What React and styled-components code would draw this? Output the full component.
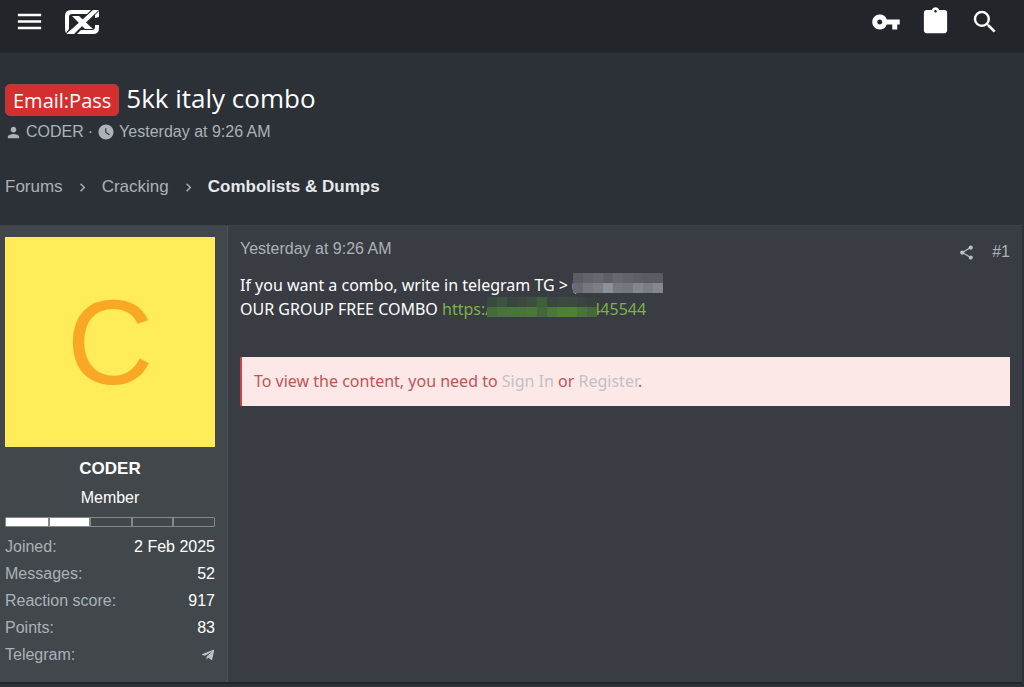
import React from 'react';
import styled, { createGlobalStyle } from 'styled-components';
import {
  MdMenu,
  MdVpnKey,
  MdSearch,
  MdPerson,
  MdWatchLater,
  MdChevronRight,
  MdShare,
} from 'react-icons/md';
import { FaTelegramPlane } from 'react-icons/fa';

const GlobalStyle = createGlobalStyle`
  * {
    box-sizing: border-box;
  }
  body {
    margin: 0;
    background: #2c3137;
    color: #fff;
    font-family: "Liberation Sans", Arial, sans-serif;
    font-size: 16px;
    line-height: 24px;
  }
  a {
    color: inherit;
    text-decoration: none;
  }
  svg {
    display: block;
    flex: none;
  }
`;

const headingFont = '"Open Sans", sans-serif';
const messageFont = '"Noto Sans", sans-serif';

const TopBar = styled.header`
  display: flex;
  align-items: center;
  height: 53px;
  padding: 0 24px 9px 14px;
  background: #222529;
  border-bottom: 1px solid #272c31;
`;

const IconButton = styled.button`
  display: flex;
  padding: 0;
  border: 0;
  background: none;
  color: ${({ $muted }) => ($muted ? '#b9bfc5' : '#fff')};
  cursor: pointer;
`;

const LogoLink = styled.a`
  margin-left: 20px;
`;

const TopActions = styled.nav`
  display: flex;
  align-items: center;
  gap: 19px;
  margin-left: auto;
`;

const ThreadHead = styled.section`
  padding: 30px 5px 0;
`;

const Title = styled.h1`
  display: flex;
  align-items: baseline;
  gap: 7px;
  margin: 0;
  font: 400 26px/30px ${headingFont};
`;

const Prefix = styled.span`
  padding: 1px 7px 0;
  border: 1px solid #a8434a;
  border-radius: 5px;
  background: #d32f2f;
  font-size: 20px;
  line-height: 29px;
`;

const Meta = styled.div`
  display: flex;
  align-items: center;
  gap: 4px;
  margin-top: 4px;
  color: #abb2b9;
`;

const Crumbs = styled.nav`
  display: flex;
  align-items: center;
  gap: 11px;
  padding: 31px 5px 26px;
  color: #abb2b9;
  font-size: 17px;
`;

const CurrentCrumb = styled.a`
  color: #e6e9ec;
  font-weight: 700;
`;

const Post = styled.article`
  display: flex;
  margin-right: 2px;
  background: #393c43;
  border-top: 1px solid #3d4247;
  border-bottom: 2px solid #212529;
`;

const UserCell = styled.aside`
  flex: none;
  width: 228px;
  padding: 11px 12px 14px 5px;
  border-right: 1px solid #4b5157;
  background: #42474c;
`;

const Avatar = styled.a`
  display: flex;
  align-items: center;
  justify-content: center;
  width: 210px;
  height: 210px;
  background: #ffec58;
  color: #f9a825;
  font-size: 120px;
  line-height: 1;
`;

const UserName = styled.h4`
  margin: 10px 0 0;
  font-size: 17px;
  line-height: 24px;
  text-align: center;
`;

const UserRank = styled.div`
  margin-top: 5px;
  text-align: center;
`;

const Level = styled.div`
  display: grid;
  grid-template-columns: repeat(5, 1fr);
  height: 10px;
  margin-top: 7px;
  border: 1px solid #83888d;
  border-radius: 1px;
`;

const LevelStep = styled.span`
  border-left: ${({ $first }) => ($first ? '0' : '2px solid #83888d')};
  background: ${({ $on }) => ($on ? '#fff' : 'transparent')};
`;

const Stats = styled.dl`
  margin: 6px 0 0;
`;

const StatRow = styled.div`
  display: flex;
  align-items: center;
  justify-content: space-between;
  height: 27px;
  dt {
    color: #abb2b9;
  }
  dd {
    margin: 0;
  }
`;

const TelegramLink = styled.a`
  display: block;
  color: #b9c1c8;
`;

const MainCell = styled.div`
  flex: 1;
  min-width: 0;
  padding: 11px 12px;
`;

const PostHead = styled.div`
  display: flex;
  justify-content: space-between;
  color: #abb2b9;
`;

const PostTools = styled.div`
  display: flex;
  align-items: center;
  gap: 17px;
  padding-top: 3px;
`;

const Message = styled.p`
  margin: 9px 0 0;
  font-family: ${messageFont};
  font-size: 16px;
  line-height: 24px;
`;

const GreenLink = styled.a`
  color: #7cb342;
`;

// sits on top of the edges of the neighbouring characters
const Mosaic = styled.span`
  position: relative;
  display: inline-grid;
  grid-template-columns: repeat(${({ $cols }) => $cols}, 10px);
  grid-auto-rows: 10px;
  margin: 0 -6px 0 -4px;
  vertical-align: top;
`;

const Tile = styled.span`
  background: ${({ $color }) => $color};
`;

const Notice = styled.div`
  margin-top: 36px;
  padding: 12px;
  border-left: 2px solid #c84448;
  background: #fde8e8;
  color: #c05355;
  font-family: ${messageFont};
  font-size: 16px;
  line-height: 25px;
  a {
    color: #bfc1c6;
  }
`;

const grayTiles = [
  '#5b5d64', '#62646a', '#66686f', '#5e6067', '#66686e', '#62646b', '#5d5f66', '#5a5c63', '#5a5c62',
  '#686a70', '#75777d', '#7c7e84', '#8b9198', '#777980', '#74767c', '#84868b', '#7b7d83', '#85878d',
];

const greenTiles = [
  '#3b4a3e', '#3c553d', '#394540', '#3b4941', '#3c503f', '#3e613d', '#3a4641', '#3b4b40', '#3a4a40', '#394540', '#39413f',
  '#456b3c', '#4a733b', '#46763a', '#4b743b', '#4b773b', '#46673c', '#4a773a', '#4d803a', '#4e803a', '#4a7439', '#45683c',
];

const stats = [
  ['Joined', '2 Feb 2025'],
  ['Messages', '52'],
  ['Reaction score', '917'],
  ['Points', '83'],
];

function Redacted({ tiles }) {
  return (
    <Mosaic $cols={tiles.length / 2} aria-hidden="true">
      {tiles.map((color, i) => (
        <Tile key={i} $color={color} />
      ))}
    </Mosaic>
  );
}

function Logo() {
  return (
    <svg width="35" height="26" viewBox="0 0 35 26" fill="#fff">
      <path d="M6 1H26L22 5H7Q4 5 4 8V20L1 24Q0 22 0 19V7Q0 1 6 1Z" />
      <path d="M28 1H34L12 22L9 25H2Q1 25 2 24L8 19Z" />
      <path d="M7 7H14L28 20H20Z" />
      <path d="M34 2V8L30 9V6Z" />
      <path d="M30 16H34V19Q34 25 28 25H12L16 21H27Q30 21 30 18Z" />
    </svg>
  );
}

function Clipboard() {
  return (
    <svg width="31" height="31" viewBox="0 0 24 24" fill="currentColor">
      <path d="M19 3h-4.18C14.4 1.84 13.3 1 12 1s-2.4.84-2.82 2H5c-1.1 0-2 .9-2 2v14c0 1.1.9 2 2 2h14c1.1 0 2-.9 2-2V5c0-1.1-.9-2-2-2zm-7 0c.55 0 1 .45 1 1s-.45 1-1 1-1-.45-1-1 .45-1 1-1z" />
    </svg>
  );
}

export default function App() {
  return (
    <>
      <GlobalStyle />
      <TopBar>
        <IconButton aria-label="Menu">
          <MdMenu size={31} />
        </IconButton>
        <LogoLink href="#" aria-label="Home">
          <Logo />
        </LogoLink>
        <TopActions>
          <IconButton aria-label="Log in">
            <MdVpnKey size={30} />
          </IconButton>
          <IconButton aria-label="Register">
            <Clipboard />
          </IconButton>
          <IconButton aria-label="Search">
            <MdSearch size={30} />
          </IconButton>
        </TopActions>
      </TopBar>

      <ThreadHead>
        <Title>
          <Prefix>Email:Pass</Prefix>
          5kk italy combo
        </Title>
        <Meta>
          <MdPerson size={17} />
          <a href="#">CODER</a>
          <span>·</span>
          <MdWatchLater size={18} />
          <a href="#">Yesterday at 9:26 AM</a>
        </Meta>
      </ThreadHead>

      <Crumbs>
        <a href="#">Forums</a>
        <MdChevronRight size={17} />
        <a href="#">Cracking</a>
        <MdChevronRight size={17} />
        <CurrentCrumb href="#">Combolists &amp; Dumps</CurrentCrumb>
      </Crumbs>

      <Post>
        <UserCell>
          <Avatar href="#">C</Avatar>
          <UserName>CODER</UserName>
          <UserRank>Member</UserRank>
          <Level>
            {[1, 2, 3, 4, 5].map((n) => (
              <LevelStep key={n} $first={n === 1} $on={n <= 2} />
            ))}
          </Level>
          <Stats>
            {stats.map(([label, value]) => (
              <StatRow key={label}>
                <dt>{label}:</dt>
                <dd>{value}</dd>
              </StatRow>
            ))}
            <StatRow>
              <dt>Telegram:</dt>
              <dd>
                <TelegramLink href="#" aria-label="Telegram">
                  <FaTelegramPlane size={14} />
                </TelegramLink>
              </dd>
            </StatRow>
          </Stats>
        </UserCell>

        <MainCell>
          <PostHead>
            <a href="#">Yesterday at 9:26 AM</a>
            <PostTools>
              <IconButton $muted aria-label="Share">
                <MdShare size={17} />
              </IconButton>
              <a href="#">#1</a>
            </PostTools>
          </PostHead>
          <Message>
            If you want a combo, write in telegram TG &gt; (<Redacted tiles={grayTiles} />
            <br />
            OUR GROUP FREE COMBO{' '}
            <GreenLink href="#">
              https:/
              <Redacted tiles={greenTiles} />
              445544
            </GreenLink>
          </Message>
          <Notice>
            To view the content, you need to <a href="#">Sign In</a> or <a href="#">Register</a>.
          </Notice>
        </MainCell>
      </Post>
    </>
  );
}
